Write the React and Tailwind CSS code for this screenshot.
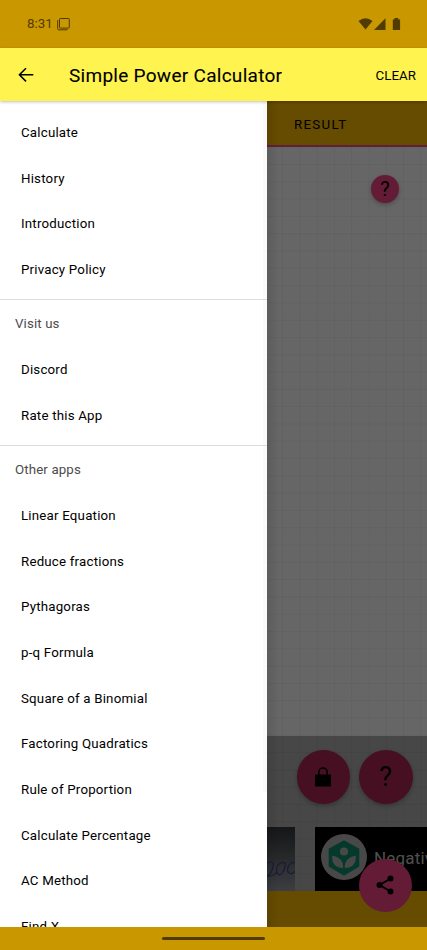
import React from "react";

const mainItems = ["Calculate", "History", "Introduction", "Privacy Policy"];
const visitItems = ["Discord", "Rate this App"];
const appItems = [
  "Linear Equation",
  "Reduce fractions",
  "Pythagoras",
  "p-q Formula",
  "Square of a Binomial",
  "Factoring Quadratics",
  "Rule of Proportion",
  "Calculate Percentage",
  "AC Method",
  "Find X",
];

function Item({ children }) {
  return (
    <li className="flex h-[45.7px] shrink-0 items-center pl-[21px] text-[13.3px] tracking-[0.2px] text-black">
      {children}
    </li>
  );
}

function Heading({ children }) {
  return (
    <h2 className="flex h-[48px] shrink-0 items-center border-t border-[#dedede] pl-[15px] pt-px text-[13.3px] tracking-[0.12px] text-[#4c4c4c]">
      {children}
    </h2>
  );
}

function StatusBar() {
  return (
    <div className="flex h-12 shrink-0 items-center bg-[#c99700] pl-[27px] pr-[26px] text-[#503c00]">
      <span className="text-[13.3px]">8:31</span>
      <svg className="ml-[4px] h-[13px] w-[13px]" viewBox="0 0 13 13" fill="none" stroke="currentColor" strokeWidth="1">
        <rect x="2.5" y="0.5" width="9.8" height="9.6" rx="0.7" />
        <path d="M0.7 2.1V10.8Q0.7 11.8 1.7 11.8H10.5" />
      </svg>
      <svg className="ml-auto h-[14px] w-[43px]" viewBox="0 0 43 14" fill="currentColor">
        <path d="M0.5 4.1Q7.5-1.6 14.5 4.1L7.5 12.6Z" />
        <path d="M16 13L27.5 1.3V13Z" />
        <path d="M34.8 2.4H36.5V1H40.3V2.4H42.1V13H34.8Z" />
      </svg>
    </div>
  );
}

function AppBar() {
  return (
    <header className="relative z-10 flex h-[53px] shrink-0 items-center bg-[#fff44f] pl-[18px] pr-[11px] pt-[2px] text-black shadow-[0_1px_3px_rgba(0,0,0,0.25)]">
      <svg className="h-4 w-4" viewBox="0 0 16 16" fill="none" stroke="currentColor" strokeWidth="1.5">
        <path d="M15.3 6.8H1.8M8 0.2L1.4 6.8L8 13.4" />
      </svg>
      <h1 className="ml-[35px] whitespace-nowrap pt-px text-[19px] tracking-[0.28px] [-webkit-text-stroke:0.1px_black]">Simple Power Calculator</h1>
      <span className="ml-auto text-[13.3px] tracking-[0.05px]">CLEAR</span>
    </header>
  );
}

function Drawer() {
  return (
    <nav className="relative flex w-[267px] shrink-0 flex-col overflow-hidden bg-white">
      <ul className="flex h-[198px] shrink-0 flex-col pt-[9px]">
        {mainItems.map((t) => <Item key={t}>{t}</Item>)}
      </ul>
      <Heading>Visit us</Heading>
      <ul className="flex h-[98px] shrink-0 flex-col">
        {visitItems.map((t) => <Item key={t}>{t}</Item>)}
      </ul>
      <Heading>Other apps</Heading>
      <ul className="flex shrink-0 flex-col">
        {appItems.map((t) => <Item key={t}>{t}</Item>)}
      </ul>
      <div className="absolute right-0 top-0 h-[691px] w-1 bg-black/[0.02]" />
    </nav>
  );
}

function AdStrip() {
  return (
    <div className="mt-auto flex h-[64px] gap-[20px] overflow-hidden">
      <div className="h-full w-[28px] shrink-0 bg-linear-to-b from-[#151617] to-[#3c3e42]">
        <svg className="h-full w-full" viewBox="0 0 28 64" fill="none" stroke="#191b38" strokeWidth="1.2">
          <path d="M0 36Q7 33 6 39Q5 47 0 49" />
          <path d="M0 49Q6 50 10 45" />
          <path d="M11 47Q8 43 11 38Q15 34 18 36Q19 41 15 46Q13 49 11 47Z" />
          <path d="M22 46Q19 43 22 38Q25 34 28 36M22 46Q25 48 28 44" />
        </svg>
      </div>
      <div className="flex h-full flex-1 items-center overflow-hidden bg-black pl-[6px]">
        <svg className="-mt-[4px] h-[46px] w-[46px] shrink-0" viewBox="0 0 46 46">
          <circle cx="23" cy="23" r="23" fill="#484848" />
          <path d="M23 6.2L38.3 14.7V32.6L23 41.8L7.7 32.6V14.7Z" fill="#05392c" />
          <circle cx="23" cy="17.5" r="4.1" fill="#484848" />
          <path d="M22.2 34C22.4 27 18.5 22.7 11.2 21.8C10.5 29.7 14.5 34 22.2 34ZM23.8 34C23.6 27 27.5 22.7 34.8 21.8C35.5 29.7 31.5 34 23.8 34Z" fill="#484848" />
        </svg>
        <span className="ml-[7px] whitespace-nowrap text-[17px] tracking-[0.2px] text-[#505050]">Negative</span>
      </div>
    </div>
  );
}

function Content() {
  return (
    <main className="relative flex min-w-0 flex-1 flex-col overflow-hidden bg-[#666]">
      <div className="flex h-[46px] shrink-0 items-center border-b-2 border-[#651d37] bg-[#664c00] pl-[27px] pt-[3px] text-[13.3px] tracking-[1.3px] text-black">
        RESULT
      </div>
      <div className="flex flex-1 flex-col bg-[linear-gradient(to_right,rgba(0,0,0,0.045)_1px,transparent_1px),linear-gradient(to_bottom,rgba(0,0,0,0.045)_1px,transparent_1px)] bg-[length:17.3px_17.3px] bg-position-[15px_17px]">
        <div className="flex flex-1 justify-end pr-7 pt-7">
          <button className="flex h-7 w-7 items-center justify-center rounded-full bg-[#641b35] text-[20px] text-black shadow-[0_2px_4px_rgba(0,0,0,0.25)]">?</button>
        </div>
        <div className="flex h-[155px] flex-col bg-black/30">
          <div className="flex gap-[9px] pl-[29.5px] pt-[14px]">
            <button className="flex h-[53.5px] w-[53.5px] shrink-0 items-center justify-center rounded-full bg-[#461022] shadow-[0_2px_4px_rgba(0,0,0,0.25)]">
              <svg className="h-[20px] w-[16px]" viewBox="0 0 16 20">
                <path d="M3.8 8V5.2A4.2 4.2 0 0 1 12.2 5.2V8" fill="none" stroke="black" strokeWidth="1.6" />
                <path d="M0 7.5H16V19.5H0Z" fill="black" />
              </svg>
            </button>
            <button className="flex h-[53.5px] w-[53.5px] shrink-0 items-center justify-center rounded-full bg-[#461022] text-[27px] text-black shadow-[0_2px_4px_rgba(0,0,0,0.25)]">?</button>
          </div>
          <AdStrip />
        </div>
      </div>
      <div className="h-[36px] shrink-0 bg-[#664c00]" />
      <button className="absolute bottom-[15px] right-[15px] flex h-[53.5px] w-[53.5px] items-center justify-center rounded-full bg-[#641b35]">
        <svg className="h-[20px] w-[18px]" viewBox="0 0 18 20">
          <path d="M14.5 3.6L3.5 10L14.5 16.4" fill="none" stroke="black" strokeWidth="1.8" />
          <circle cx="14.5" cy="3.6" r="3" />
          <circle cx="3.5" cy="10" r="3" />
          <circle cx="14.5" cy="16.4" r="3" />
        </svg>
      </button>
      <div className="absolute inset-y-0 left-0 w-[12px] bg-linear-to-r from-black/10 to-transparent" />
    </main>
  );
}

export default function App() {
  return (
    <div className="flex h-[950px] w-[427px] flex-col overflow-hidden font-[Roboto,sans-serif]">
      <StatusBar />
      <AppBar />
      <div className="flex min-h-0 flex-1">
        <Drawer />
        <Content />
      </div>
      <footer className="flex h-[23px] shrink-0 items-center justify-center bg-[#c99700]">
        <div className="h-[3px] w-[103px] rounded-full bg-[#503c00]" />
      </footer>
    </div>
  );
}
